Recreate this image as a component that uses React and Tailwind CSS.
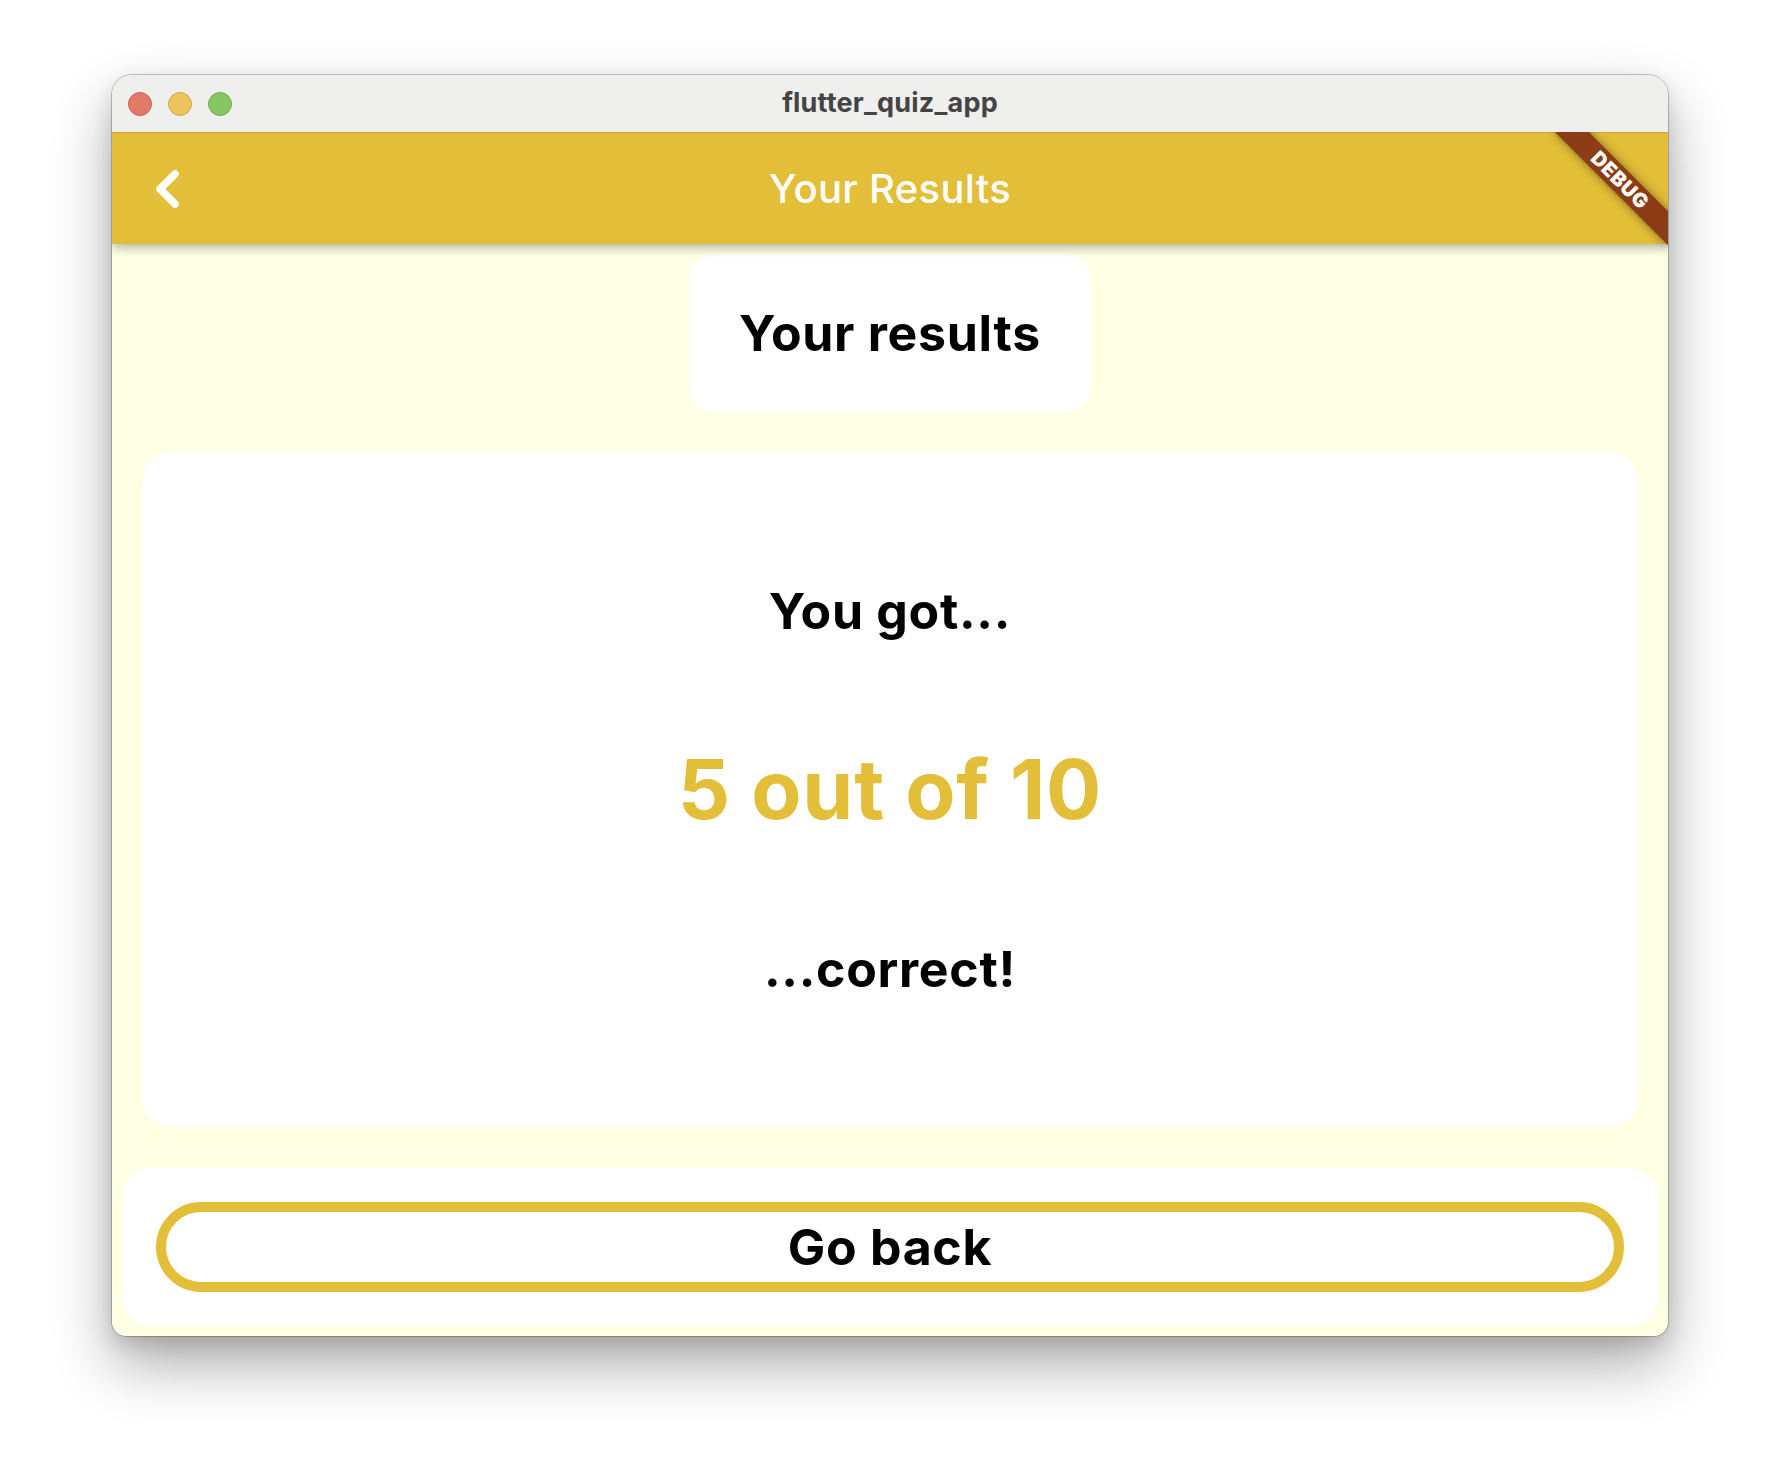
import React from 'react';

// Ergebnis-Seite im macOS-Fenster (Flutter-Debug-Build)
const GOLD = 'bg-[#E3BE38]';

const TrafficLights = () => (
  <div className="flex items-center gap-[16px] pl-[16px]">
    <span className="w-[24px] h-[24px] rounded-full bg-[#E07A67] border border-[#C9634F]" />
    <span className="w-[24px] h-[24px] rounded-full bg-[#EBC45C] border border-[#D2AA45]" />
    <span className="w-[24px] h-[24px] rounded-full bg-[#86C663] border border-[#6FAE4D]" />
  </div>
);

const DebugBanner = () => (
  <div className="absolute top-0 right-0 w-0 h-0 rotate-45 origin-top-left z-20 pointer-events-none">
    <div className="absolute left-[-80px] top-[56px] w-[160px] h-[24px] bg-[#8C3D15] shadow-[0_0_10px_rgba(0,0,0,0.45)] flex items-center justify-center">
      <span className="text-white text-[20px] leading-none font-black tracking-[0.5px] font-['Inter',sans-serif]">
        DEBUG
      </span>
    </div>
  </div>
);

export default function App() {
  return (
    <div className="w-[1780px] h-[1484px] bg-white pt-[75px] pl-[112px] font-['Inter','Noto_Sans',sans-serif]">
      <div className="w-[1556px] h-[1261px] rounded-t-[20px] rounded-b-[14px] overflow-hidden flex flex-col bg-[#FFFFE4] shadow-[0_0_0_1px_rgba(0,0,0,0.22),0_28px_60px_rgba(0,0,0,0.33),0_8px_20px_rgba(0,0,0,0.12)]">
        {/* Titelleiste */}
        <div className="h-[57px] shrink-0 bg-[#EFEFED] grid grid-cols-[1fr_auto_1fr] items-center">
          <TrafficLights />
          <span className="text-[27px] font-bold text-[#444444] tracking-[0.2px]">flutter_quiz_app</span>
          <div />
        </div>

        <div className="relative flex-1 flex flex-col overflow-hidden">
          <DebugBanner />

          {/* AppBar */}
          <div className={`relative z-10 h-[112px] shrink-0 ${GOLD} border-t border-[#CBA52E] shadow-[0_4px_10px_rgba(0,0,0,0.28)] grid grid-cols-[1fr_auto_1fr] items-center`}>
            <div className="pl-[43px] flex items-center">
              <svg width="26" height="42" viewBox="0 0 26 42" fill="none">
                <polyline points="20,6 5,21 20,36" stroke="white" strokeWidth="7.5" strokeLinecap="round" strokeLinejoin="round" />
              </svg>
            </div>
            <span className="text-white text-[40px] font-medium leading-none tracking-[0.3px]">Your Results</span>
            <div />
          </div>

          {/* Inhalt */}
          <div className="flex-1 flex flex-col items-center pt-[10px] pb-[10px]">
            <div className="w-[402px] h-[158px] shrink-0 bg-white rounded-[26px] flex items-center justify-center">
              <span className="text-[50px] font-bold text-black leading-none tracking-[0.7px]">Your results</span>
            </div>

            <div className="mt-[40px] self-stretch mx-[30px] flex-1 bg-white rounded-[30px] flex flex-col items-center justify-center gap-[113px]">
              <span className="text-[50px] font-bold text-black leading-none tracking-[0.7px]">You got...</span>
              <span className="text-[82px] font-bold text-[#E3BE38] leading-none tracking-[0.8px]">5 out of 10</span>
              <span className="text-[50px] font-bold text-black leading-none tracking-[0.7px]">...correct!</span>
            </div>

            <div className="mt-[41px] self-stretch mx-[10px] h-[158px] shrink-0 bg-white rounded-[30px] px-[34px] py-[34px]">
              <button className="w-full h-[90px] rounded-full border-[10px] border-[#E3BE38] bg-white flex items-center justify-center">
                <span className="text-[50px] font-bold text-black leading-none tracking-[0.7px]">Go back</span>
              </button>
            </div>
          </div>
        </div>
      </div>
    </div>
  );
}
